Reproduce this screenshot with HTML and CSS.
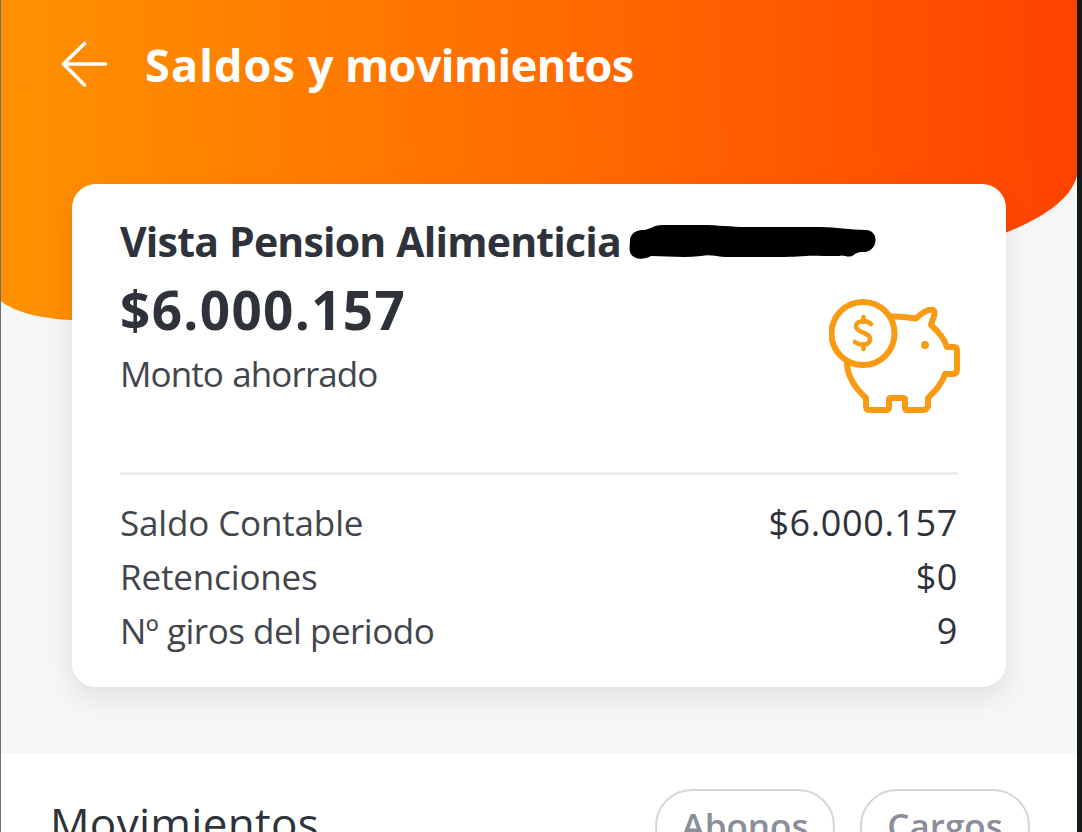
FILE: index.html
```html
<!DOCTYPE html>
<html lang="es">
<head>
<meta charset="utf-8">
<title>Saldos y movimientos</title>
<link rel="stylesheet" href="styles.css">
</head>
<body>
<div class="screen">
  <section class="hero">
    <svg class="hero-shape" viewBox="0 0 1076 324" preserveAspectRatio="none" aria-hidden="true">
      <defs>
        <linearGradient id="warm" gradientUnits="userSpaceOnUse" x1="0" y1="30" x2="1077" y2="0">
          <stop offset="0" stop-color="#ff9100"/>
          <stop offset="0.5" stop-color="#ff6d00"/>
          <stop offset="1" stop-color="#ff4200"/>
        </linearGradient>
      </defs>
      <path fill="url(#warm)" d="M0 0H1076V176C1070 199 1042 218 1004 233L900 300L71 320C44 319 14 313 0 301Z"/>
    </svg>
    <header class="topbar">
      <svg class="back" viewBox="0 0 48 48" aria-hidden="true"><path d="M23.500 2.500L2.500 23L23.500 44M2.500 23H44.500"/></svg>
      <h1 class="title"><span class="wide">Saldos</span> y <span class="narrow">movimientos</span></h1>
    </header>
    <article class="card">
      <div class="account">
        <h2 class="account-name">Vista Pension Alimenticia</h2>
        <svg class="redaction" viewBox="0 0 248 36" aria-hidden="true"><path d="M1 14C3 7 8 5 15 5C22 4 25 0 33 0H72C90 0 100 2 120 2H192C207 2 220 5 237 5C251 6 249 26 235 27C227 27 227 29 223 31C218 33 214 29 210 31H194C177 30 169 32 151 32H97C88 32 82 29 72 31C54 33 38 31 22 31C13 36 3 34 1 27C0 23 1 20 1 14Z"/></svg>
      </div>
      <div class="summary">
        <div>
          <p class="amount">$6.000.157</p>
          <p class="caption">Monto ahorrado</p>
        </div>
        <svg class="pig" viewBox="0 0 132 116" aria-hidden="true">
          <circle cx="34" cy="34.500" r="31.500"/>
          <path d="M61 17.500C70 17 78 18 87 19.500C92 14 99 10 104 11C108 13 103 21 102 26C110 33 115 39 118 48H125Q128 48 128 52V70Q128 75 124 75H116C113 85 106 92 99 99V107Q98 111 94 111H78Q76 111 76 108V100Q76 99 73 99H62Q60 99 60 101V108Q60 111 57 111H40Q37 111 37 107V99C26 89 18 78 18 63"/>
          <path class="dollar" d="M42 25C36 20 26 22 27 28C28 34 41 33 41 40C41 47 31 47 26 43M34.500 18V23M34.500 45V50"/>
          <circle class="eye" cx="96" cy="46" r="4"/>
        </svg>
      </div>
      <dl class="details">
        <div class="row"><dt>Saldo Contable</dt><dd>$6.000.157</dd></div>
        <div class="row"><dt>Retenciones</dt><dd>$0</dd></div>
        <div class="row"><dt class="withdrawals">Nº giros del periodo</dt><dd>9</dd></div>
      </dl>
    </article>
  </section>
  <section class="movements">
    <h2 class="movements-title">Movimientos</h2>
    <div class="filters">
      <button class="pill credits">Abonos</button>
      <button class="pill debits">Cargos</button>
    </div>
  </section>
</div>
</body>
</html>
```
FILE: styles.css
```css
* { box-sizing: border-box; margin: 0; padding: 0; }
body {
  width: 1082px;
  height: 832px;
  overflow: hidden;
  font-family: "Open Sans", "Noto Sans", sans-serif;
  color: #2e323a;
  background: #fff;
}
.screen {
  height: 832px;
  overflow: hidden;
  border-left: 1px solid #6e6e70;
  border-right: 5px solid #151918;
}
h1, h2, p, dt, dd { white-space: nowrap; }
.hero {
  position: relative;
  height: 753px;
  padding: 0 71px;
  background: #f4f6f8;
}
.hero-shape { position: absolute; left: 0; top: 0; width: 100%; height: 324px; }
.topbar {
  position: relative;
  display: flex;
  align-items: center;
  gap: 36px;
  height: 184px;
  padding-bottom: 54px;
  margin-left: -11px;
}
.back { width: 48px; height: 48px; fill: none; stroke: #fff; stroke-width: 3.6; stroke-linecap: round; stroke-linejoin: round; }
.title { font-size: 45px; line-height: 62px; font-weight: 700; color: #fff; }
.title .wide { letter-spacing: 1.1px; }
.title .narrow { letter-spacing: -0.6px; }
.card {
  position: relative;
  height: 503px;
  padding: 30px 48px 29px;
  border-radius: 24px;
  background: #fff;
  box-shadow: 0 10px 24px rgba(40, 42, 44, 0.1);
}
.account { display: flex; height: 54px; }
.account-name { width: 509px; font-size: 41px; line-height: 54px; font-weight: 700; letter-spacing: -0.8px; word-spacing: 1px; }
.redaction { width: 248px; height: 36px; margin-top: 11px; flex: none; }
.summary { display: flex; justify-content: space-between; height: 132px; padding-top: 7px; }
.amount { font-size: 53px; line-height: 70px; font-weight: 700; letter-spacing: 1.35px; }
.caption { margin-top: 2px; font-size: 35px; line-height: 54px; color: #42464c; letter-spacing: -0.9px; word-spacing: 1px; }
.pig { width: 132px; height: 116px; margin: 24px -3px 0 0; fill: none; stroke: #f99a14; stroke-width: 6; stroke-linejoin: round; stroke-linecap: round; }
.pig .dollar { stroke-width: 4.500; }
.pig .eye { fill: #f99a14; stroke: none; }
.details { margin-top: 72px; padding-top: 21px; border-top: 3px solid #ececee; }
.row { display: flex; justify-content: space-between; font-size: 35px; line-height: 54px; }
dt { color: #42464c; letter-spacing: -0.15px; }
dt.withdrawals { letter-spacing: -0.5px; }
dd { font-size: 36px; letter-spacing: 0.6px; }
.movements {
  display: flex;
  justify-content: space-between;
  padding: 36px 47px 0 49px;
}
.movements-title { margin-top: -2px; font-size: 44px; line-height: 72px; font-weight: 400; letter-spacing: 0.3px; }
.filters { display: flex; gap: 25px; }
.pill {
  height: 74px;
  border: 2px solid #d6d6d8;
  border-radius: 37px;
  background: #fff;
  color: #8b8d98;
  font: 600 35px/70px "Open Sans", "Noto Sans", sans-serif;
}
.credits { width: 180px; }
.debits { width: 170px; }
```
